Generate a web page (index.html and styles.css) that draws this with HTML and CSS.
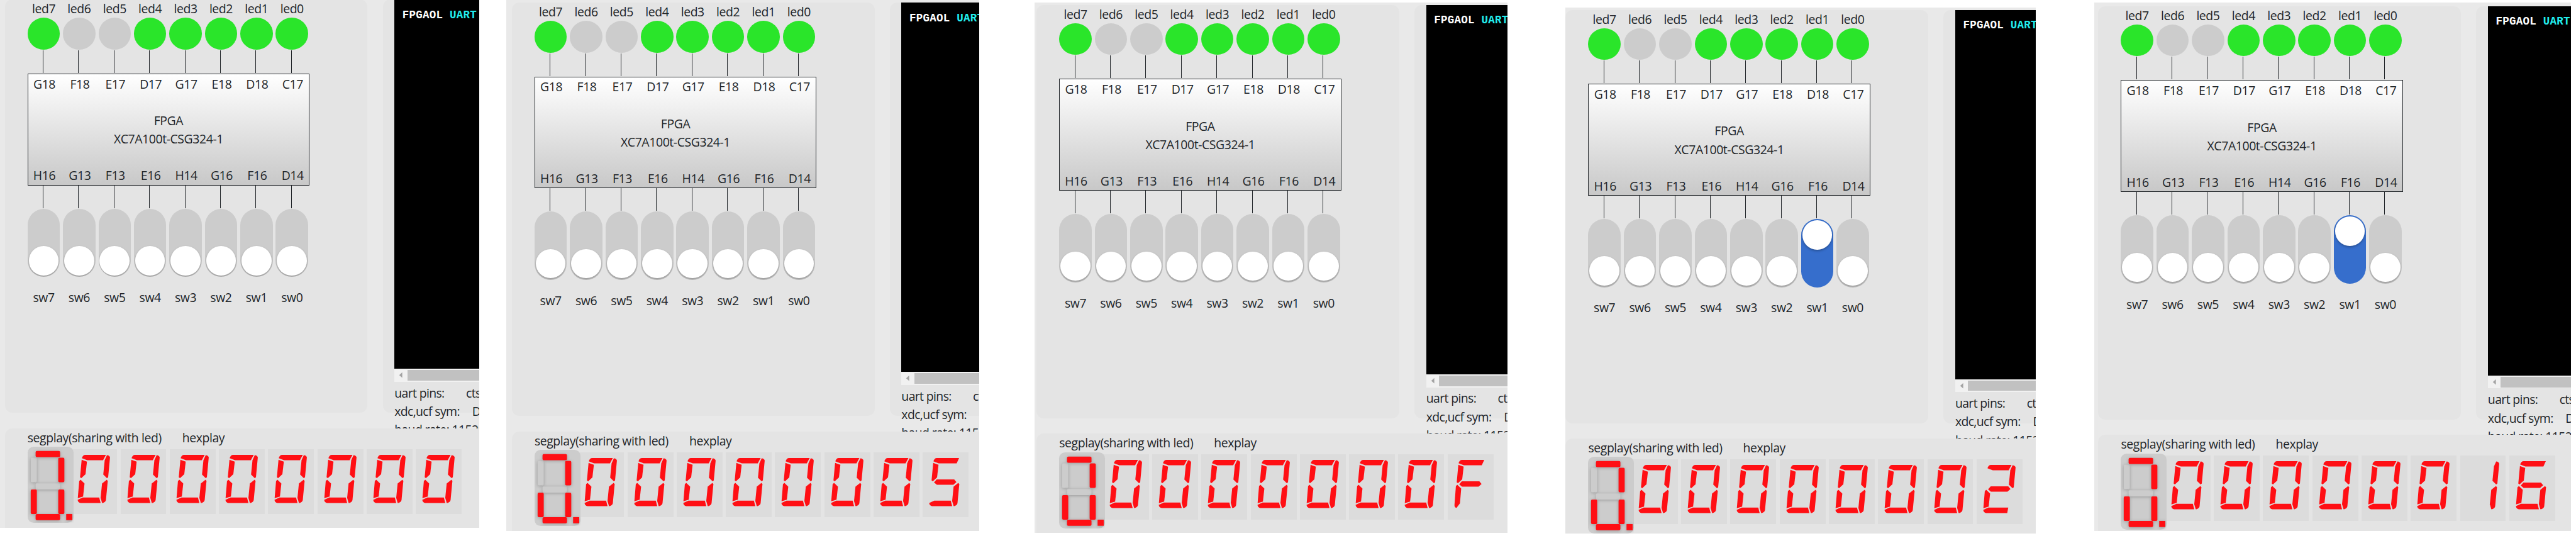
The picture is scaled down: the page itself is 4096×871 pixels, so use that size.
FILE: index.html
```
<!DOCTYPE html>
<html lang="en">
<head>
<meta charset="utf-8">
<title>FPGAOL</title>
<link rel="stylesheet" href="styles.css">
</head>
<body>
<main class="strip" id="strip"></main>
<script src="app.js"></script>
</body>
</html>
```
FILE: styles.css
```
html, body { margin: 0; background: #fff; overflow: hidden; }
body { zoom: 0.97246; }
.strip {
  display: flex; align-items: flex-start; width: 4212px; height: 896px; background: #fff;
  font: 20px/30px "Open Sans", "Noto Sans", sans-serif; letter-spacing: -0.43px; color: #212529;
}
.board { flex: none; overflow: hidden; background: #e9e9e9; }
.sheet { width: 960px; padding-left: 8px; padding-top: 4px; }
.upper { display: flex; gap: 25px; height: 701px; }
.card { background: #e4e4e4; border-radius: 12px; }
.io { width: 593px; height: 676px; box-sizing: border-box; padding-left: 37px; }
.row { display: flex; gap: 5px; width: 459px; }
.cell { width: 53px; flex: none; text-align: center; }
.label { height: 30px; line-height: 31px; }
.led { width: 53px; height: 52px; border-radius: 50%; background: #ccc; }
.led.on { background: #2ae52a; }
.wire { width: 1px; margin-left: 25px; background: #212529; }
.wire.up { height: 37px; margin-top: 1px; margin-bottom: 1px; }
.wire.down { height: 37px; margin-bottom: 1px; }
.chip {
  width: 461px; height: 183px; box-sizing: border-box; border: 1px solid #212529; padding-top: 1px;
  background: linear-gradient(#fff, #c8c8c8); text-align: center;
  display: grid; grid-template-rows: repeat(6, 30px);
}
.chip .row { grid-row: 1; }
.chip .name { grid-row: 3; }
.chip .model { grid-row: 4; }
.chip .bottom { grid-row: 6; }
.switch {
  width: 53px; height: 112px; box-sizing: border-box; border-radius: 26.5px; background: #ccc;
  display: flex; flex-direction: column; justify-content: flex-end; align-items: center;
  padding: 2px 0 3px; margin-bottom: 18px; overflow: hidden;
}
.switch.on { background: #366ecc; justify-content: flex-start; }
.knob { width: 49px; height: 48px; border-radius: 50%; background: #fff; box-shadow: 0 2px 4px rgba(0,0,0,.27); }
.uart { width: 300px; height: 676px; box-sizing: border-box; padding-left: 19px; border-radius: 12px 0 0 12px; }
.term {
  height: 604px; background: #000; box-sizing: border-box; padding: 11px 13px; color: #fff;
  font: bold 18px/29px "Liberation Mono", monospace; letter-spacing: 0.25px;
}
.term span { color: #2ee; }
.bar { height: 21px; background: #f1f1f1; display: flex; align-items: center; margin-bottom: 3px; }
.bar svg { width: 21px; height: 21px; flex: none; }
.thumb { flex: 1; height: 17px; background: #c1c1c1; }
.info { display: flex; letter-spacing: -0.65px; }
.info .k1 { width: 117px; }
.info .k2 { width: 127px; }
.info .k3 { width: 94px; }
.lower { position: relative; height: 220px; box-sizing: border-box; padding-left: 37px; border-radius: 12px 0 0 0; }
.titles { display: flex; height: 30px; line-height: 31px; }
.titles .seg { width: 253px; }
.displays { display: flex; align-items: flex-start; }
.segbox { width: 75px; height: 125px; border-radius: 10px; background: #ccc; flex: none; position: relative; }
.segbox svg, .digit svg { display: block; }
.segbox rect { fill: #ccc; filter: drop-shadow(0 1px 3px rgba(0,0,0,.25)); }
.segbox rect.on { fill: #ff0f14; }
.digits { display: flex; gap: 5.5px; margin: 4px 0 0 -3.5px; }
.digit { width: 75px; height: 106px; background: #dcdcdc; }
.digit path { fill: #ff0f14; }
```
FILE: app.js
```
// One entry per board view: gap before it, visible size, scroll offset and state.
const boards = [
  { gap: 0,  top: 0,  w: 784, h: 863, x: 0,  y: -5, hex: "00000000", sw: "" },
  { gap: 44, top: 0,  w: 773, h: 868, x: 1,  y: 0,  hex: "00000005", sw: "" },
  { gap: 91, top: 4,  w: 773, h: 867, x: -5, y: 0,  hex: "0000000F", sw: "" },
  { gap: 95, top: 12, w: 769, h: 860, x: -8, y: 0,  hex: "00000002", sw: "1" },
  { gap: 95, top: 4,  w: 780, h: 864, x: -1, y: 2,  hex: "00000016", sw: "1" }
];

const seg = {
  a: "M53 44Q58 28 70 28H171L157 54H79Z",
  A: "M53 44Q58 28 70 28H179L167 54H79Z",
  b: "M176 29Q190 30 191 41L182 137L176 142L158 124L165 54Z",
  c: "M175 150L180 156L171 250Q168 260 155 264L152 263L145 238L152 168Z",
  d: "M32 248L57 237H138L145 264H47Q35 262 32 248Z",
  D: "M32 248L57 237H155L150 264H47Q35 262 32 248Z",
  e: "M47 150L66 168L59 232L33 240L40 156Z",
  E: "M47 150L66 168L60 241L43 263Q33 262 33 250L40 156Z",
  f: "M52 52L78 61L71 123L50 142L44 137Z",
  g: "M56 147L69 133H155L166 146L151 159H70Z"
};
const glyph = { 0: "abcdef", 1: "bc", 2: "abgeD", 5: "Afgcd", 6: "Afgecd", F: "AfgE" };

const range = [7, 6, 5, 4, 3, 2, 1, 0];
const cells = f => `<div class="row">${range.map(n => `<div class="cell">${f(n)}</div>`).join("")}</div>`;
const ledPins = ["G18", "F18", "E17", "D17", "G17", "E18", "D18", "C17"];
const swPins = ["H16", "G13", "F13", "E16", "H14", "G16", "F16", "D14"];
const pins = (list, cls) => `<div class="row ${cls}">${list.map(p => `<div class="cell">${p}</div>`).join("")}</div>`;

const digit = c => `<div class="digit"><svg width="75" height="106" viewBox="0 0 225 318">${
  [...glyph[c]].map(s => `<path d="${seg[s]}"/>`).join("")}</svg></div>`;

const segment = `<svg width="75" height="125" viewBox="0 0 75 125">
  <rect x="5" y="18" width="10" height="40" rx="2"/><rect x="13" y="60" width="40" height="10" rx="2"/>
  <rect class="on" x="13" y="7" width="40" height="10" rx="2"/><rect class="on" x="50" y="18" width="10" height="40" rx="2"/>
  <rect class="on" x="50" y="70" width="10" height="40" rx="2"/><rect class="on" x="5" y="70" width="10" height="40" rx="2"/>
  <rect class="on" x="13" y="110" width="40" height="10" rx="2"/><rect class="on" x="63" y="110" width="10" height="10"/></svg>`;

document.getElementById("strip").innerHTML = boards.map(b => `
<section class="board" style="width:${b.w}px;height:${b.h}px;margin:${b.top}px 0 0 ${b.gap}px">
 <div class="sheet" style="margin:${b.y}px 0 0 ${b.x}px">
  <div class="upper">
   <div class="card io">
    ${cells(n => `<div class="label">led${n}</div><div class="led ${n === 6 || n === 5 ? "" : "on"}"></div><div class="wire up"></div>`)}
    <div class="chip">${pins(ledPins, "")}<div class="name">FPGA</div><div class="model">XC7A100t-CSG324-1</div>${pins(swPins, "bottom")}</div>
    ${cells(n => `<div class="wire down"></div><div class="switch ${b.sw === String(n) ? "on" : ""}"><div class="knob"></div></div><div class="label">sw${n}</div>`)}
   </div>
   <div class="card uart">
    <div class="term">FPGAOL <span>UART</span></div>
    <div class="bar"><svg viewBox="0 0 21 21"><path d="M13 6V15L8 10.5Z" fill="#a3a3a3"/></svg><div class="thumb"></div></div>
    <div class="info"><span class="k1">uart pins:</span><span>cts</span></div>
    <div class="info"><span class="k2">xdc,ucf sym:</span><span>D</span></div>
    <div class="info"><span class="k3">baud rate:</span><span>11520</span></div>
   </div>
  </div>
  <div class="card lower">
   <div class="titles"><span class="seg">segplay(sharing with led)</span><span>hexplay</span></div>
   <div class="displays"><div class="segbox">${segment}</div><div class="digits">${[...b.hex].map(digit).join("")}</div></div>
  </div>
 </div>
</section>`).join("");
```
